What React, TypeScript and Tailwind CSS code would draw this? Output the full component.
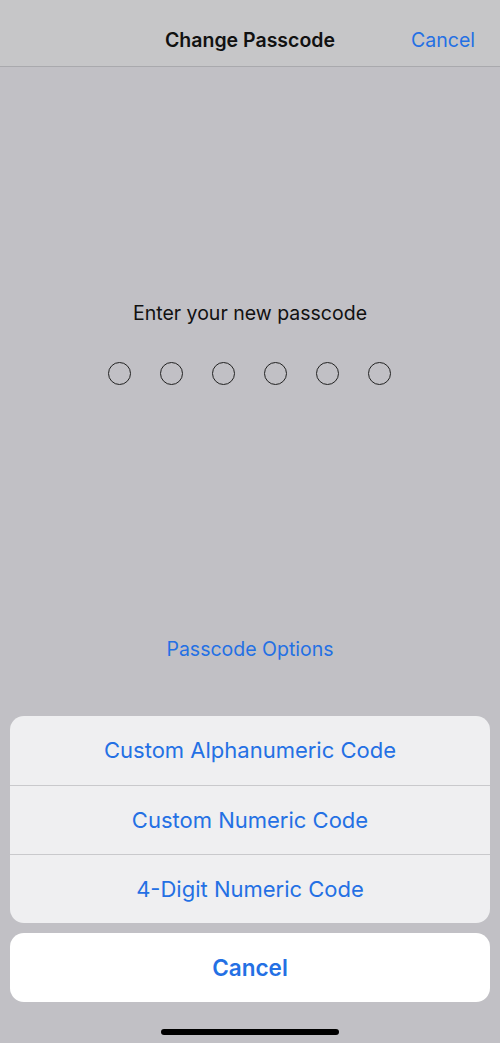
import React from "react";

export default function App() {
  const font = { fontFamily: '"Inter", "Liberation Sans", sans-serif' };
  return (
    <div className="w-[500px] h-[1043px] bg-[#c1c0c5] flex flex-col overflow-hidden" style={font}>
      <div className="h-[67px] bg-[#c6c6c8] border-b border-[#a9a9ad] grid grid-cols-[1fr_auto_1fr] items-end pb-[16px]">
        <div />
        <div className="text-[19.5px] font-semibold text-[#111] leading-none">Change Passcode</div>
        <div className="flex justify-end pr-[25px]">
          <span className="text-[19.5px] text-[#2470e4] leading-none">Cancel</span>
        </div>
      </div>
      <div className="flex flex-col items-center pt-[237px]">
        <div className="text-[19.5px] text-[#111] leading-none">Enter your new passcode</div>
        <div className="flex gap-[29px] mt-[38px] -ml-[2px]">
          {[0, 1, 2, 3, 4, 5].map((i) => (
            <div key={i} className="w-[23px] h-[23px] rounded-full border-[1.5px] border-[#222]" />
          ))}
        </div>
        <div className="mt-[255px] text-[19.5px] text-[#2470e4] leading-none">Passcode Options</div>
      </div>
      <div className="mt-auto px-[10px] pb-[8px] flex flex-col">
        <div className="rounded-[14px] bg-[#efeff1] overflow-hidden flex flex-col">
          {["Custom Alphanumeric Code", "Custom Numeric Code", "4-Digit Numeric Code"].map((t, i) => (
            <div
              key={t}
              className={`h-[69px] flex items-center justify-center text-[22px] text-[#2470e4] ${i > 0 ? "border-t border-[#c9c9cc]" : ""}`}
            >
              {t}
            </div>
          ))}
        </div>
        <div className="mt-[10px] h-[69px] rounded-[14px] bg-white flex items-center justify-center text-[22.5px] font-semibold text-[#2470e4]">
          Cancel
        </div>
        <div className="flex justify-center pt-[27px]">
          <div className="w-[178px] h-[6px] rounded-full bg-black" />
        </div>
      </div>
    </div>
  );
}
